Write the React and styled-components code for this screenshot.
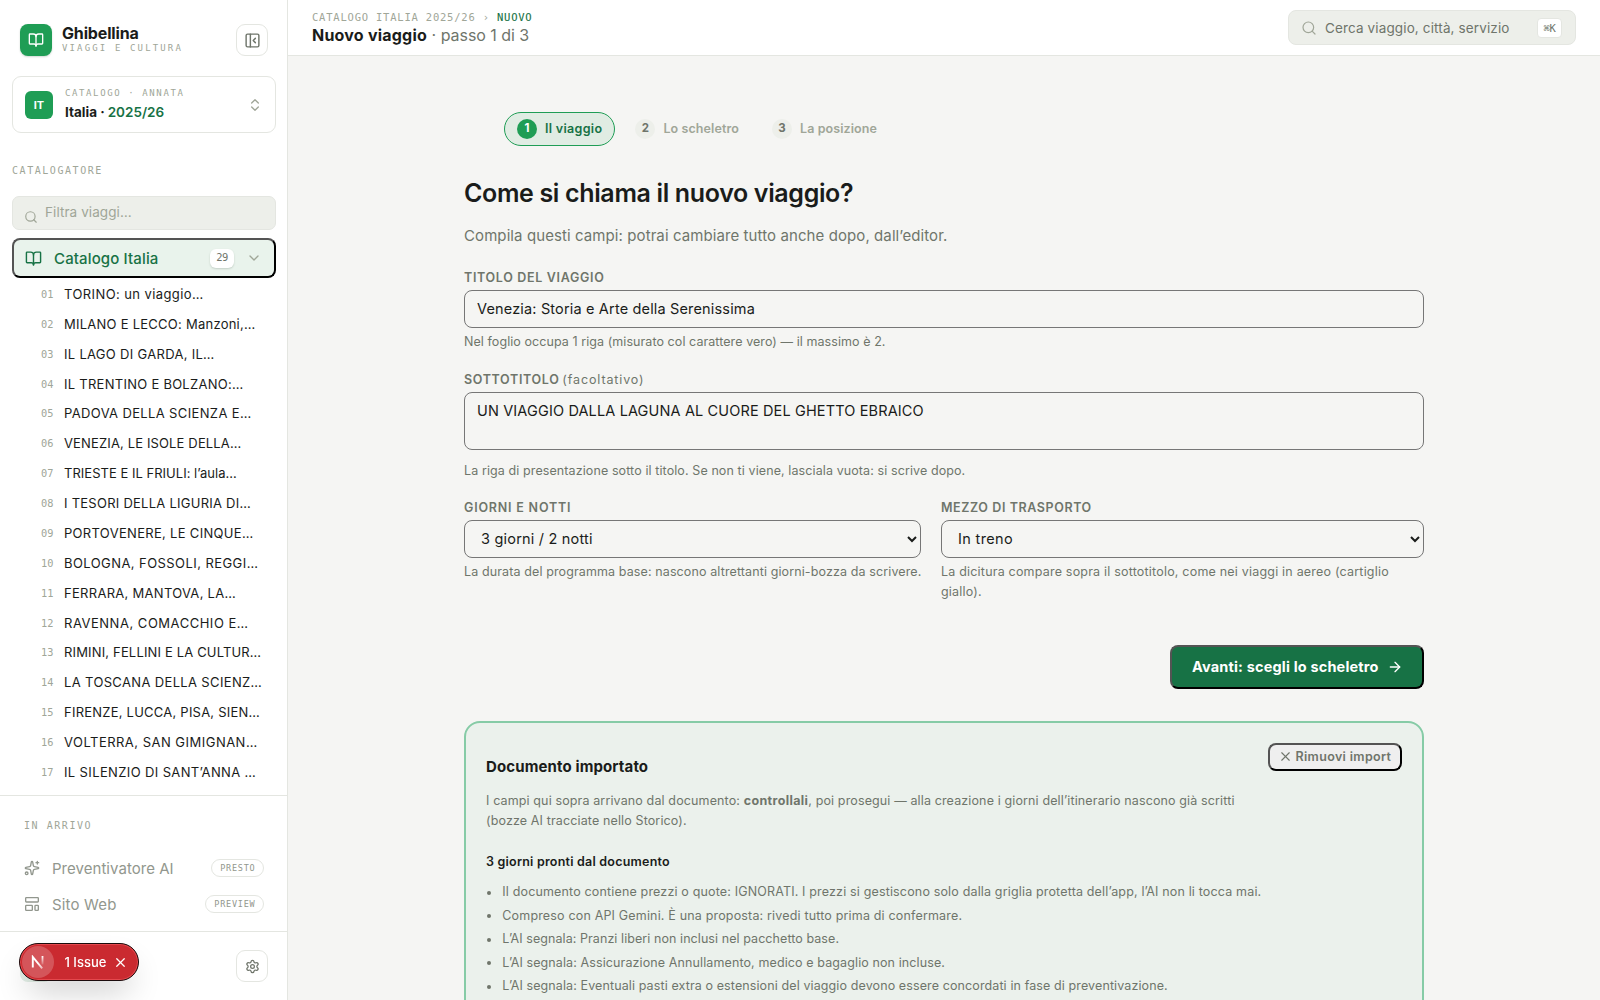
import React from "react";
import styled, { createGlobalStyle, css } from "styled-components";
import {
  BookOpen, PanelLeftClose, ChevronsUpDown, Search, ChevronDown,
  Settings, X, ArrowRight,
} from "lucide-react";

const c = {
  ink: "#1a1c1a",
  muted: "#6f756b",
  faint: "#a0a698",
  line: "#e4e6e1",
  green: "#1f9d55",
  deep: "#177245",
  page: "#f5f5f3",
  well: "#edefea",
};
const mono = `"DejaVu Sans Mono", "Liberation Mono", monospace`;

const Global = createGlobalStyle`
  *, *::before, *::after { box-sizing: border-box; }
  body { margin: 0; background: ${c.page}; color: ${c.ink}; font-family: Inter, "Liberation Sans", sans-serif; overflow: hidden; }
  button, input, textarea, select { font-family: inherit; margin: 0; }
  h1, h2, h3, p, ul, ol { margin: 0; padding: 0; font-weight: inherit; }
  ul, ol { list-style: none; }
  svg { flex: none; display: block; }
`;

const T = styled.span`
  letter-spacing: ${(p) => p.$ls || 0}px;
  white-space: pre;
`;

const Shell = styled.div`
  display: grid;
  grid-template-columns: 288px 1fr;
  height: 100vh;
  overflow: hidden;
`;

/* ---------- sidebar ---------- */
const Sidebar = styled.aside`
  display: flex;
  flex-direction: column;
  height: 100vh;
  min-height: 0;
  background: #fff;
  border-right: 1px solid ${c.line};
`;
const Brand = styled.div`
  display: flex;
  align-items: center;
  height: 32px;
  margin: 24px 19px 20px 20px;
`;
const Tile = styled.div`
  display: grid;
  place-items: center;
  flex: none;
  width: ${(p) => p.$size}px;
  height: ${(p) => p.$size}px;
  border-radius: ${(p) => p.$r}px;
  background: ${c.green};
  color: #fff;
  font-size: 11px;
  font-weight: 700;
  line-height: 26px;
  box-shadow: ${(p) => (p.$shadow ? "0 1px 2px rgba(20, 60, 35, .2)" : "none")};
`;
const BrandText = styled.div`
  flex: 1;
  margin: -3px 0 0 10px;
`;
const BrandName = styled.div`
  font-size: 16px;
  font-weight: 700;
  line-height: 20px;
`;
const Mono = styled.div`
  font-family: ${mono};
  font-size: ${(p) => p.$size}px;
  line-height: ${(p) => p.$lh || 12}px;
  letter-spacing: ${(p) => p.$ls}px;
  color: ${(p) => p.$color || c.faint};
  white-space: pre;
`;
const IconButton = styled.button`
  display: grid;
  place-items: center;
  width: 32px;
  height: 32px;
  padding: 0;
  border: 1px solid ${c.line};
  border-radius: 9px;
  background: #fff;
  color: ${c.muted};
`;
const Switcher = styled.div`
  display: flex;
  align-items: center;
  height: 57px;
  margin: 0 11px 0 12px;
  padding: 0 12px;
  border: 1px solid ${c.line};
  border-radius: 9px;
  color: ${c.faint};
`;
const SwitcherText = styled.div`
  flex: 1;
  margin: -2px 0 0 12px;
`;
const SwitcherName = styled.div`
  margin-top: 5px;
  font-size: 13.5px;
  font-weight: 700;
  line-height: 17px;
  color: ${c.ink};
`;
const Year = styled.span`
  margin-left: 3px;
  font-weight: 600;
  color: ${c.deep};
`;
const SectionLabel = styled.div`
  padding: 31px 12px 18px;
`;
const Filter = styled.div`
  display: flex;
  align-items: flex-start;
  height: 34px;
  margin: 0 11px 8px 12px;
  padding: 5px 11px 0;
  border: 1px solid ${c.line};
  border-radius: 7px;
  background: ${c.well};
  color: ${c.faint};
  font-size: 13.5px;
  line-height: 20px;
  svg { margin: 8px 7px 0 0; }
`;
const CatalogButton = styled.button`
  display: flex;
  align-items: center;
  flex: none;
  height: 40px;
  margin: 0 11px 1px 12px;
  padding: 0 12px 0 11px;
  border: 2px outset #000;
  border-radius: 8px;
  background: #e9f3ec;
  color: ${c.deep};
  font-size: 15px;
  font-weight: 500;
  text-align: left;
`;
const CatalogName = styled.span`
  flex: 1;
  margin-left: 12px;
  letter-spacing: .13px;
`;
const Count = styled.span`
  width: 24px;
  height: 19px;
  margin-right: 12px;
  border-radius: 6px;
  background: #fff;
  box-shadow: 0 1px 2px rgba(30, 50, 35, .18);
  color: ${c.muted};
  font-family: ${mono};
  font-size: 10.5px;
  line-height: 17px;
  letter-spacing: -.5px;
  text-align: center;
`;
const TripList = styled.ul`
  flex: 1;
  min-height: 0;
  overflow: hidden;
`;
const Trip = styled.li`
  display: flex;
  align-items: center;
  height: 29.875px;
  padding-left: 41px;
  font-size: 13px;
  white-space: pre;
`;
const TripNo = styled.span`
  width: 23px;
  font-family: ${mono};
  font-size: 10.3px;
  color: ${c.faint};
`;
const Soon = styled.div`
  flex: none;
  height: 136px;
  border-top: 1px solid ${c.line};
  padding: 23px 23px 0 24px;
`;
const SoonGroup = styled.div`
  margin-top: 17px;
`;
const SoonRow = styled.div`
  display: flex;
  align-items: center;
  height: 36px;
  color: #92978e;
  font-size: 15px;
`;
const SoonName = styled.span`
  flex: 1;
  margin-left: 12px;
  letter-spacing: ${(p) => p.$ls}px;
`;
const SoonTag = styled.span`
  width: ${(p) => p.$w}px;
  height: 18px;
  border: 1px solid ${c.line};
  border-radius: 9px;
  font-family: ${mono};
  font-size: 8.5px;
  line-height: 16px;
  letter-spacing: .76px;
  text-indent: .7px;
  text-align: center;
`;
const Foot = styled.div`
  display: flex;
  align-items: flex-start;
  justify-content: space-between;
  flex: none;
  height: 69px;
  padding: 18px 19px 0 20px;
  border-top: 1px solid ${c.line};
`;
const Avatar = styled.div`
  width: 32px;
  height: 32px;
  border-radius: 8px;
  background: #e2efe6;
`;
const Issue = styled.div`
  position: fixed;
  left: 19px;
  bottom: 19px;
  display: flex;
  align-items: center;
  width: 120px;
  height: 38px;
  padding-left: 2px;
  border: 1px solid #1b0b0c;
  border-radius: 19px;
  background: #ca2a30;
  box-shadow: inset 0 0 0 1px #e5484d, 0 16px 32px -8px rgba(0, 0, 0, .24);
  color: #fff;
  font-size: 13px;
  font-weight: 500;
  line-height: 18px;
  white-space: pre;
`;
const IssueMark = styled.span`
  display: grid;
  place-items: center;
  width: 32px;
  height: 32px;
  margin-right: 10.5px;
  border-radius: 50%;
  background: #d4555a;
`;
const CloseIcon = styled(X)`
  margin-left: 6.5px;
`;

/* ---------- main ---------- */
const Main = styled.div`
  min-width: 0;
  height: 100vh;
  overflow: hidden;
`;
const TopBar = styled.header`
  display: flex;
  align-items: center;
  justify-content: space-between;
  height: 56px;
  padding: 0 24px;
  border-bottom: 1px solid ${c.line};
  background: #fff;
`;
const Crumb = styled(Mono)`
  margin-top: 1px;
  b { font-weight: 400; color: ${c.deep}; -webkit-text-stroke: .1px ${c.deep}; }
`;
const Title = styled.div`
  font-size: 16px;
  line-height: 22px;
  color: ${c.muted};
  white-space: pre;
  b { font-weight: 700; color: ${c.ink}; letter-spacing: .22px; }
`;
const SearchBox = styled.div`
  display: flex;
  align-items: center;
  width: 288px;
  height: 35px;
  padding: 0 13px 0 12px;
  border: 1px solid ${c.line};
  border-radius: 8px;
  background: ${c.well};
  color: ${c.muted};
  font-size: 13.5px;
  line-height: 18px;
  svg { margin-right: 8px; color: ${c.faint}; }
`;
const Kbd = styled.span`
  width: 25px;
  height: 20px;
  margin-left: auto;
  border: 1px solid ${c.line};
  border-radius: 4px;
  background: #fff;
  font-family: ${mono};
  font-size: 10.5px;
  line-height: 18px;
  letter-spacing: -.4px;
  text-align: center;
`;
const Page = styled.main`
  width: 960px;
  margin: 0 auto;
  padding-top: 56px;
`;
const Steps = styled.ol`
  display: flex;
  gap: 7px;
  padding-left: 40px;
`;
const Step = styled.li`
  display: flex;
  align-items: center;
  gap: 8px;
  height: 34px;
  padding: 0 12px;
  border: 1px solid ${(p) => (p.$on ? c.green : "transparent")};
  border-radius: 17px;
  background: ${(p) => (p.$on ? "#e0ece3" : "transparent")};
  color: ${(p) => (p.$on ? c.deep : c.faint)};
  font-size: 12.5px;
  font-weight: 600;
  line-height: 18px;
`;
const StepName = styled(T)`
  margin-top: -1px;
`;
const StepNo = styled.span`
  width: 20px;
  height: 20px;
  border-radius: 50%;
  background: ${(p) => (p.$on ? c.green : c.well)};
  color: ${(p) => (p.$on ? "#fff" : c.muted)};
  font-size: 11.5px;
  font-weight: 700;
  line-height: 19px;
  text-align: center;
`;
const Heading = styled.h1`
  margin-top: 30px;
  font-size: 25px;
  font-weight: 600;
  line-height: 34px;
  letter-spacing: -.35px;
`;
const Lead = styled.p`
  margin-top: 15px;
  font-size: 15px;
  line-height: 22px;
  letter-spacing: .09px;
  color: ${c.muted};
`;
const Field = styled.div`
  display: flex;
  flex-direction: column;
  margin-top: ${(p) => p.$mt}px;
`;
const Label = styled.label`
  margin-bottom: 2px;
  font-size: 12.5px;
  font-weight: 600;
  line-height: 20px;
  letter-spacing: ${(p) => p.$ls}px;
  color: ${c.muted};
  small { margin-left: -1px; font-size: 12.5px; font-weight: 400; letter-spacing: .88px; }
`;
const control = css`
  width: 100%;
  height: 38px;
  border: 1px solid #767676;
  border-radius: 8px;
  background: transparent;
  color: ${c.ink};
  font-size: 14.5px;
  letter-spacing: ${(p) => p.$ls}px;
`;
const Input = styled.input`
  ${control}
  padding: 0 12px 1px;
`;
const Area = styled.textarea`
  ${control}
  height: 58px;
  padding: 8px 12px;
  line-height: 20px;
  resize: none;
`;
const Select = styled.select`
  ${control}
  padding: 0 12px 1px;
`;
const Hint = styled.p`
  margin-top: ${(p) => p.$mt || 4}px;
  font-size: 12.5px;
  line-height: 20px;
  color: ${c.muted};
  white-space: nowrap;
`;
const Pair = styled.div`
  display: grid;
  grid-template-columns: 457px 1fr;
  gap: 20px;
`;
const Actions = styled.div`
  display: flex;
  justify-content: flex-end;
  margin-top: 43px;
`;
const Primary = styled.button`
  display: flex;
  align-items: center;
  justify-content: space-between;
  width: 254px;
  height: 44px;
  padding: 0 19px 0 20px;
  border: 2px outset #000;
  border-radius: 8px;
  background: ${c.deep};
  color: #fff;
  font-size: 14.5px;
  font-weight: 700;
  line-height: 18px;
`;
const Imported = styled.section`
  display: flex;
  justify-content: space-between;
  height: 420px;
  margin-top: 32px;
  padding: 20px;
  border: 2px solid #86cba6;
  border-radius: 16px;
  background: #ebf1ec;
`;
const ImportedBody = styled.div`
  padding-top: 14px;
`;
const ImportedTitle = styled.h2`
  font-size: 15px;
  font-weight: 700;
  line-height: 20px;
`;
const Intro = styled.p`
  margin-top: 14px;
  font-size: 12.5px;
  line-height: 20px;
  color: ${c.muted};
  white-space: nowrap;
  b { font-weight: 700; }
`;
const Sub = styled.h3`
  margin-top: 21px;
  font-size: 12.5px;
  font-weight: 600;
  line-height: 20px;
`;
const Notes = styled.ul`
  display: grid;
  gap: 3.5px;
  margin-top: 10px;
`;
const Note = styled.li`
  display: flex;
  align-items: center;
  font-size: 12.5px;
  line-height: 20px;
  color: ${c.muted};
  &::before {
    content: "";
    width: 4px;
    height: 4px;
    margin: 1px 11.3px 0 1px;
    border-radius: 50%;
    background: currentColor;
  }
`;
const Remove = styled.button`
  display: flex;
  align-items: center;
  flex: none;
  gap: 3px;
  width: 134px;
  height: 28px;
  padding: 0 0 1px 7.5px;
  border: 2px outset #000;
  border-radius: 8px;
  background: #efefef;
  color: ${c.muted};
  font-size: 12.5px;
  font-weight: 600;
`;

const trips = [
  ["TORINO: un viaggio…", 0.41], ["MILANO E LECCO: Manzoni,…", 0.25], ["IL LAGO DI GARDA, IL…", 0.3],
  ["IL TRENTINO E BOLZANO:…", 0.27], ["PADOVA DELLA SCIENZA E…", 0.36], ["VENEZIA, LE ISOLE DELLA…", 0.14],
  ["TRIESTE E IL FRIULI: l’aula…", 0.02], ["I TESORI DELLA LIGURIA DI…", 0.25], ["PORTOVENERE, LE CINQUE…", 0.31],
  ["BOLOGNA, FOSSOLI, REGGI…", 0.43], ["FERRARA, MANTOVA, LA…", 0.29], ["RAVENNA, COMACCHIO E…", 0.52],
  ["RIMINI, FELLINI E LA CULTUR…", 0.16], ["LA TOSCANA DELLA SCIENZ…", 0.35], ["FIRENZE, LUCCA, PISA, SIEN…", 0.23],
  ["VOLTERRA, SAN GIMIGNAN…", 0.48], ["IL SILENZIO DI SANT’ANNA …", 0.37],
];
const notes = [
  ["Il documento contiene prezzi o quote: IGNORATI. I prezzi si gestiscono solo dalla griglia protetta dell’app, l’AI non li tocca mai.", 0.16],
  ["Compreso con API Gemini. È una proposta: rivedi tutto prima di confermare.", 0.17],
  ["L’AI segnala: Pranzi liberi non inclusi nel pacchetto base.", 0.07],
  ["L’AI segnala: Assicurazione Annullamento, medico e bagaglio non incluse.", 0.11],
  ["L’AI segnala: Eventuali pasti extra o estensioni del viaggio devono essere concordati in fase di preventivazione.", 0.11],
];
const steps = [["Il viaggio", 0.32], ["Lo scheletro", 0.1], ["La posizione", 0.08]];

const SparkIcon = () => (
  <svg width="16" height="16" viewBox="0 0 24 24" fill="none" stroke="currentColor" strokeWidth="2" strokeLinecap="round" strokeLinejoin="round">
    <path d="M11.017 2.814a1 1 0 0 1 1.966 0l1.051 5.558a2 2 0 0 0 1.594 1.594l5.558 1.051a1 1 0 0 1 0 1.966l-5.558 1.051a2 2 0 0 0-1.594 1.594l-1.051 5.558a1 1 0 0 1-1.966 0l-1.051-5.558a2 2 0 0 0-1.594-1.594l-5.558-1.051a1 1 0 0 1 0-1.966l5.558-1.051a2 2 0 0 0 1.594-1.594z" />
    <path d="M20 2v4M22 4h-4" />
    <circle cx="4" cy="20" r="2" />
  </svg>
);
const LayoutIcon = () => (
  <svg width="16" height="16" viewBox="0 0 24 24" fill="none" stroke="currentColor" strokeWidth="2" strokeLinecap="round" strokeLinejoin="round">
    <rect x="2.5" y="2.5" width="19" height="6.5" rx="1" />
    <rect x="2.5" y="14" width="10" height="7.5" rx="1" />
    <rect x="16.5" y="14" width="5" height="7.5" rx="1" />
  </svg>
);
const NextMark = () => (
  <svg width="14" height="14" viewBox="0 0 14 14" fill="none">
    <defs>
      <linearGradient id="diag" x1="7" y1="8" x2="12" y2="14" gradientUnits="userSpaceOnUse">
        <stop stopColor="#fff" /><stop offset="1" stopColor="#fff" stopOpacity=".5" />
      </linearGradient>
      <linearGradient id="stem" x1="11" y1="1" x2="11" y2="10" gradientUnits="userSpaceOnUse">
        <stop stopColor="#fff" /><stop offset="1" stopColor="#fff" stopOpacity=".1" />
      </linearGradient>
    </defs>
    <path d="M1.8 12.5V2L11.2 13.4" stroke="url(#diag)" strokeWidth="1.9" />
    <path d="M11.5 1v8.5" stroke="url(#stem)" strokeWidth="1.8" />
  </svg>
);

export default function App() {
  return (
    <Shell>
      <Global />
      <Sidebar>
        <Brand>
          <Tile $size={32} $r={8} $shadow><BookOpen size={16} strokeWidth={2} /></Tile>
          <BrandText>
            <BrandName><T $ls={-0.15}>Ghibellina</T></BrandName>
            <Mono $size={9} $ls={2.14} $lh={11}>VIAGGI E CULTURA</Mono>
          </BrandText>
          <IconButton><PanelLeftClose size={17} strokeWidth={2} /></IconButton>
        </Brand>
        <Switcher>
          <Tile $size={28} $r={6}>IT</Tile>
          <SwitcherText>
            <Mono $size={9} $ls={1.61}>CATALOGO · ANNATA</Mono>
            <SwitcherName>Italia ·<Year>2025/26</Year></SwitcherName>
          </SwitcherText>
          <ChevronsUpDown size={16} strokeWidth={2} />
        </Switcher>
        <SectionLabel>
          <Mono $size={10} $ls={1.55} $lh={14}>CATALOGATORE</Mono>
        </SectionLabel>
        <Filter><Search size={14} strokeWidth={2} /><T $ls={0.08}>Filtra viaggi…</T></Filter>
        <CatalogButton>
          <BookOpen size={17} strokeWidth={2} />
          <CatalogName>Catalogo Italia</CatalogName>
          <Count>29</Count>
          <ChevronDown size={16} strokeWidth={2} color={c.faint} />
        </CatalogButton>
        <TripList>
          {trips.map(([name, ls], i) => (
            <Trip key={name}><TripNo>{String(i + 1).padStart(2, "0")}</TripNo><T $ls={ls}>{name}</T></Trip>
          ))}
        </TripList>
        <Soon>
          <Mono $size={10} $ls={1.55} $lh={14}>IN ARRIVO</Mono>
          <SoonGroup>
            <SoonRow><SparkIcon /><SoonName $ls={0.04}>Preventivatore AI</SoonName><SoonTag $w={53}>PRESTO</SoonTag></SoonRow>
            <SoonRow><LayoutIcon /><SoonName $ls={0.17}>Sito Web</SoonName><SoonTag $w={59}>PREVIEW</SoonTag></SoonRow>
          </SoonGroup>
        </Soon>
        <Foot>
          <Avatar />
          <IconButton><Settings size={15} strokeWidth={2} /></IconButton>
        </Foot>
      </Sidebar>

      <Main>
        <TopBar>
          <div>
            <Crumb $size={10.5} $ls={0.79} $lh={14}>CATALOGO ITALIA 2025/26 › <b>NUOVO</b></Crumb>
            <Title><b>Nuovo viaggio</b> · <T $ls={-0.05}>passo 1 di 3</T></Title>
          </div>
          <SearchBox>
            <Search size={16} strokeWidth={1.8} />
            <T $ls={0.13}>Cerca viaggio, città, servizio</T>
            <Kbd>⌘K</Kbd>
          </SearchBox>
        </TopBar>
        <Page>
          <Steps>
            {steps.map(([name, ls], i) => (
              <Step key={name} $on={i === 0}><StepNo $on={i === 0}>{i + 1}</StepNo><StepName $ls={ls}>{name}</StepName></Step>
            ))}
          </Steps>
          <Heading>Come si chiama il nuovo viaggio?</Heading>
          <Lead>Compila questi campi: potrai cambiare tutto anche dopo, dall’editor.</Lead>
          <Field $mt={21}>
            <Label $ls={0.67}>TITOLO DEL VIAGGIO</Label>
            <Input $ls={0.16} defaultValue="Venezia: Storia e Arte della Serenissima" />
            <Hint><T $ls={0.07}>Nel foglio occupa 1 riga (misurato col carattere vero) — il massimo è 2.</T></Hint>
          </Field>
          <Field $mt={18}>
            <Label $ls={0.66}>SOTTOTITOLO <small>(facoltativo)</small></Label>
            <Area $ls={0.135} defaultValue="UN VIAGGIO DALLA LAGUNA AL CUORE DEL GHETTO EBRAICO" />
            <Hint $mt={11}><T $ls={0.1}>La riga di presentazione sotto il titolo. Se non ti viene, lasciala vuota: si scrive dopo.</T></Hint>
          </Field>
          <Pair>
            <Field $mt={17}>
              <Label $ls={0.8}>GIORNI E NOTTI</Label>
              <Select $ls={0.2}><option>3 giorni / 2 notti</option></Select>
              <Hint><T $ls={0.115}>La durata del programma base: nascono altrettanti giorni-bozza da scrivere.</T></Hint>
            </Field>
            <Field $mt={17}>
              <Label $ls={0.59}>MEZZO DI TRASPORTO</Label>
              <Select $ls={0.35}><option>In treno</option></Select>
              <Hint><T $ls={0.2}>La dicitura compare sopra il sottotitolo, come nei viaggi in aereo (cartiglio{"\n"}giallo).</T></Hint>
            </Field>
          </Pair>
          <Actions>
            <Primary><T $ls={0.17}>Avanti: scegli lo scheletro</T><ArrowRight size={16} strokeWidth={2} /></Primary>
          </Actions>
          <Imported>
            <ImportedBody>
              <ImportedTitle><T $ls={0.12}>Documento importato</T></ImportedTitle>
              <Intro>
                <T $ls={0.13}>I campi qui sopra arrivano dal documento: </T>
                <b><T $ls={0.36}>controllali</T></b>
                <T $ls={0.13}>, poi prosegui — alla creazione i giorni dell’itinerario nascono già scritti{"\n"}(bozze AI tracciate nello Storico).</T>
              </Intro>
              <Sub><T $ls={0.22}>3 giorni pronti dal documento</T></Sub>
              <Notes>
                {notes.map(([text, ls]) => <Note key={text}><T $ls={ls}>{text}</T></Note>)}
              </Notes>
            </ImportedBody>
            <Remove><X size={15} strokeWidth={1.8} /><T $ls={0.34}>Rimuovi import</T></Remove>
          </Imported>
        </Page>
      </Main>

      <Issue>
        <IssueMark><NextMark /></IssueMark>
        1 Issue
        <CloseIcon size={15} strokeWidth={2} />
      </Issue>
    </Shell>
  );
}
